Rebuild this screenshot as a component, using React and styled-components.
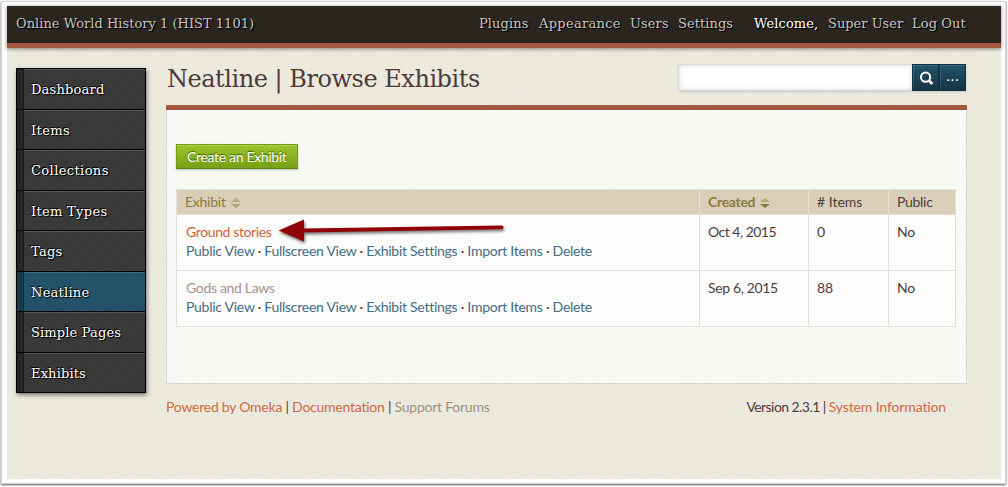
import React from 'react';
import styled, { createGlobalStyle, css } from 'styled-components';

const grain = (alpha, freq) =>
  `url("data:image/svg+xml,${encodeURIComponent(
    `<svg xmlns='http://www.w3.org/2000/svg' width='200' height='200'><filter id='n' x='0' y='0' width='100%' height='100%'><feTurbulence type='fractalNoise' baseFrequency='${freq}' numOctaves='2' stitchTiles='stitch'/><feColorMatrix values='0 0 0 0 0.35 0 0 0 0 0.33 0 0 0 0 0.25 0 0 0 ${alpha} 0'/></filter><rect width='200' height='200' filter='url(#n)'/></svg>`
  )}")`;

const slab = `'DejaVu Serif', 'Liberation Serif', serif`;
const sans = `Lato, 'Open Sans', 'Liberation Sans', sans-serif`;

const GlobalStyle = createGlobalStyle`
  *, *::before, *::after { box-sizing: border-box; }
  body { margin: 0; background: #fff; }
`;

const Frame = styled.div`
  width: 1008px;
  height: 487px;
  padding: 1px 2px 3px 1px;
  background: #fff;
  overflow: hidden;
`;

const Sheet = styled.div`
  height: 483px;
  padding: 5px;
  background: #fff;
  box-shadow: inset 0 0 0 1px #d4d4d4, 0 1px 2px rgba(0, 0, 0, 0.65);
`;

const Page = styled.div`
  width: 994px;
  height: 473px;
  margin-left: 1px;
  background: ${grain(0.16, 0.7)} #f2f0e4;
  font: 14px/19px ${sans};
  color: #4e3c3d;
  white-space: nowrap;
`;

const Header = styled.header`
  display: flex;
  justify-content: space-between;
  height: 42px;
  padding: 8px 0 0 9px;
  background: #2b2520;
  border-bottom: 5px solid #a0583f;
  box-shadow: 0 1px 4px rgba(0, 0, 0, 0.45);
  font: 13px/20px ${slab};
  color: #c9c5c1;
  text-shadow: 1px 1px 1px #000, 1px 1px 0 #000;
`;

const SiteTitle = styled.div`
  letter-spacing: ${(p) => p.$tracking}px;
`;

const HeaderNav = styled.nav`
  display: flex;
  width: 522px;
`;

const HeaderLink = styled.a`
  width: ${(p) => p.$width}px;
  letter-spacing: ${(p) => p.$tracking}px;
  ${(p) => p.$bright && css`color: #fff;`}
`;

const Body = styled.div`
  display: flex;
  align-items: flex-start;
  gap: 20px;
  padding: 20px 34px 0 9px;
`;

const SideNav = styled.nav`
  flex: 0 0 130px;
  height: 325px;
  display: grid;
  grid-template-rows: repeat(8, 1fr);
  border: 1px solid #000;
  border-top: 0;
  background: #000;
  box-shadow: 1px 2px 4px rgba(0, 0, 0, 0.5);
  font: 13px/20px ${slab};
`;

const SideLink = styled.a`
  margin-top: 1px;
  padding: 11px 0 0 8px;
  color: #fff;
  letter-spacing: ${(p) => p.$tracking}px;
  text-shadow: 1px 1px 1px #000, -1px -1px 0 #000;
  border-left: 6px solid ${(p) => (p.$active ? '#173a4b' : '#242424')};
  box-shadow: inset 1px 0 0 ${(p) => (p.$active ? '#102e3c' : '#1b1b1b')},
    inset 0 1px 0 ${(p) => (p.$active ? '#3b6b80' : '#565656')};
  background:
    repeating-linear-gradient(45deg, rgba(0, 0, 0, 0.05) 0 1px, transparent 1px 2px),
    repeating-linear-gradient(-45deg, rgba(0, 0, 0, 0.05) 0 1px, transparent 1px 2px),
    ${(p) => (p.$active ? '#25566f' : '#3c3c3c')};
`;

const Main = styled.main`
  flex: 0 0 801px;
`;

const TitleRow = styled.div`
  display: flex;
  justify-content: space-between;
  align-items: flex-start;
  height: 41px;
  margin-top: -4px;
  padding-right: 1px;
`;

const Title = styled.h1`
  margin: 0 0 0 1px;
  font: 400 24px/30px ${slab};
  letter-spacing: ${(p) => p.$tracking}px;
  color: #4e3a3b;
`;

const Search = styled.form`
  display: flex;
  width: 288px;
  height: 27px;
  box-shadow: 0 1px 2px rgba(0, 0, 0, 0.12);
`;

const SearchInput = styled.input`
  width: 234px;
  height: 27px;
  padding: 0 6px;
  border: 1px solid #d8dade;
  border-right: 0;
  background: #fff;
  box-shadow: inset 0 0 5px rgba(0, 0, 0, 0.16);
  outline: 0;
`;

const SearchButton = styled.button`
  display: flex;
  align-items: center;
  justify-content: center;
  width: 27px;
  height: 27px;
  padding: ${(p) => p.$padding || 0};
  border: 1px solid #122f3f;
  color: #fff;
  background: linear-gradient(#22536b, #153444);
  box-shadow: inset 1px 1px 0 rgba(255, 255, 255, 0.13);
  font: 14px/20px ${sans};
  letter-spacing: 1.1px;
`;

const Panel = styled.section`
  height: 279px;
  border-top: 5px solid #a0583f;
`;

const PanelBody = styled.div`
  height: 274px;
  padding: 34px 9px 0;
  border: 1px solid #d5d8d0;
  border-top: 0;
  background: ${grain(0.035, 0.2)} #f9fbf6;
`;

const CreateButton = styled.a`
  display: block;
  width: 122px;
  height: 25px;
  margin-bottom: 20px;
  padding-left: 10px;
  border: 1px solid #749d17;
  border-bottom-color: #5f8410;
  background: linear-gradient(#9ac62b, #789f16);
  box-shadow: inset 0 1px 0 rgba(255, 255, 255, 0.18), 0 1px 2px rgba(0, 0, 0, 0.25);
  color: #fff;
  line-height: 24px;
  letter-spacing: ${(p) => p.$tracking}px;
  text-shadow: 0 -1px 1px #3d5700;
`;

const Table = styled.div`
  width: 780px;
  border: 1px solid #e0e2dc;
  border-bottom: 0;
`;

const Row = styled.div`
  display: grid;
  grid-template-columns: 523px 109px 80px 66px;
  height: ${(p) => (p.$head ? 25 : 56)}px;
  background: ${(p) => (p.$head ? '#d9ceb7' : '#fcfcfa')};
  border-bottom: 1px solid ${(p) => (p.$head ? '#e6dec9' : '#e0e2dc')};
`;

const Cell = styled.div`
  padding: ${(p) => (p.$head ? '2px' : '7px')} 0 0 8px;
  color: ${(p) => p.$color || '#4e3c3d'};
  font-weight: ${(p) => (p.$bold ? 700 : 400)};
  letter-spacing: ${(p) => p.$tracking || 0}px;
  &:not(:last-child) {
    border-right: 1px solid ${(p) => (p.$head ? '#e8e0cd' : '#e0e2dc')};
  }
`;

const ExhibitName = styled.a`
  display: block;
  padding-left: 1px;
  letter-spacing: ${(p) => p.$tracking}px;
  color: ${(p) => (p.$muted ? '#a89191' : '#cf6240')};
`;

const Actions = styled.div`
  padding-left: 1px;
  letter-spacing: ${(p) => p.$tracking}px;
`;

const Action = styled.a`
  color: #446d83;
`;

const SortIcon = styled.svg`
  margin-left: 5px;
  vertical-align: -1px;
`;

const Footer = styled.footer`
  display: flex;
  justify-content: space-between;
  padding: 13px 21px 0 0;
`;

const FooterText = styled.div`
  letter-spacing: ${(p) => p.$tracking}px;
`;

const FooterLink = styled.a`
  letter-spacing: ${(p) => (p.$tracking === undefined ? 'inherit' : `${p.$tracking}px`)};
  color: ${(p) => (p.$muted ? '#a09080' : '#cf6a43')};
`;

const Pointer = styled.svg`
  position: absolute;
  left: 272px;
  top: 214px;
  pointer-events: none;
`;

const Sort = ({ down }) => (
  <SortIcon width="10" height="10" viewBox="0 0 10 10">
    <path d="M0 4 L5 0 L10 4Z" fill="#b7aa80" />
    <path d="M0 6 L5 10 L10 6Z" fill={down ? '#8a7b3c' : '#b0a274'} />
  </SortIcon>
);

const headerLinks = [
  ['Plugins', 60, 0.1],
  ['Appearance', 91, 0.3],
  ['Users', 48, 0.1],
  ['Settings', 76, 0.05],
  ['Welcome,', 74, 0.9 / 8, true],
  ['Super User', 84, 0],
  ['Log Out', 60, 0.1],
];

const sideLinks = [
  ['Dashboard', 0.2],
  ['Items', 0.4],
  ['Collections', 0.4],
  ['Item Types', 0.32],
  ['Tags', 0.25],
  ['Neatline', 0.25],
  ['Simple Pages', 0.15],
  ['Exhibits', 0.15],
];

const actions = ['Public View', 'Fullscreen View', 'Exhibit Settings', 'Import Items', 'Delete'];

const exhibits = [
  { name: 'Ground stories', date: 'Oct 4, 2015', items: '0', shown: 'No', nameTracking: -0.38, dateTracking: -0.52 },
  { name: 'Gods and Laws', date: 'Sep 6, 2015', items: '88', shown: 'No', muted: true, nameTracking: -0.33, dateTracking: -0.35 },
];

export default function App() {
  return (
    <Frame>
      <GlobalStyle />
      <Sheet>
        <Page>
          <Header>
            <SiteTitle $tracking={0.02}>Online World History 1 (HIST 1101)</SiteTitle>
            <HeaderNav>
              {headerLinks.map(([label, width, tracking, bright]) => (
                <HeaderLink key={label} $width={width} $tracking={tracking} $bright={bright}>
                  {label}
                </HeaderLink>
              ))}
            </HeaderNav>
          </Header>
          <Body>
            <SideNav>
              {sideLinks.map(([label, tracking]) => (
                <SideLink key={label} $tracking={tracking} $active={label === 'Neatline'}>
                  {label}
                </SideLink>
              ))}
            </SideNav>
            <Main>
              <TitleRow>
                <Title $tracking={-0.47}>Neatline | Browse Exhibits</Title>
                <Search>
                  <SearchInput />
                  <SearchButton type="button" $padding="2px 0 0 1px">
                    <svg width="15" height="15" viewBox="0 0 15 15" fill="none" stroke="#fff">
                      <circle cx="6.6" cy="6.2" r="4.6" strokeWidth="2" />
                      <path d="M10 9.7 L13.4 13" strokeWidth="2.6" />
                    </svg>
                  </SearchButton>
                  <SearchButton type="button" $padding="0 0 3px 1px">...</SearchButton>
                </Search>
              </TitleRow>
              <Panel>
                <PanelBody>
                  <CreateButton $tracking={-0.33}>Create an Exhibit</CreateButton>
                  <Table>
                    <Row $head>
                      <Cell $head $color="#8a7b3f" $tracking={-0.25}>Exhibit<Sort /></Cell>
                      <Cell $head $bold $color="#8a7b3f" $tracking={-0.3}>Created<Sort down /></Cell>
                      <Cell $head># Items</Cell>
                      <Cell $head $tracking={-0.3}>Public</Cell>
                    </Row>
                    {exhibits.map((e) => (
                      <Row key={e.name}>
                        <Cell>
                          <ExhibitName $muted={e.muted} $tracking={e.nameTracking}>{e.name}</ExhibitName>
                          <Actions $tracking={-0.27}>
                            {actions.map((a, i) => (
                              <React.Fragment key={a}>
                                {i > 0 && ' · '}
                                <Action>{a}</Action>
                              </React.Fragment>
                            ))}
                          </Actions>
                        </Cell>
                        <Cell $tracking={e.dateTracking}>{e.date}</Cell>
                        <Cell>{e.items}</Cell>
                        <Cell $tracking={-0.3}>{e.shown}</Cell>
                      </Row>
                    ))}
                  </Table>
                </PanelBody>
              </Panel>
              <Footer>
                <FooterText $tracking={-0.24}>
                  <FooterLink>Powered by Omeka</FooterLink> | <FooterLink>Documentation</FooterLink> |{' '}
                  <FooterLink $muted>Support Forums</FooterLink>
                </FooterText>
                <FooterText $tracking={-0.56}>
                  Version 2.3.1 | <FooterLink $tracking={-0.13}>System Information</FooterLink>
                </FooterText>
              </Footer>
            </Main>
          </Body>
        </Page>
      </Sheet>
      <Pointer width="240" height="34" viewBox="0 0 240 34">
        <g style={{ filter: 'drop-shadow(1px 2px 1.5px rgba(0,0,0,.55))' }}>
          <path d="M6.5 16.5 L32 5.5 V14.5 L229.5 11.5 Q231.5 11.5 231.5 13.3 Q231.5 15.3 229.5 15.3 L32 18.5 V27.5Z" fill="#900204" />
        </g>
      </Pointer>
    </Frame>
  );
}
